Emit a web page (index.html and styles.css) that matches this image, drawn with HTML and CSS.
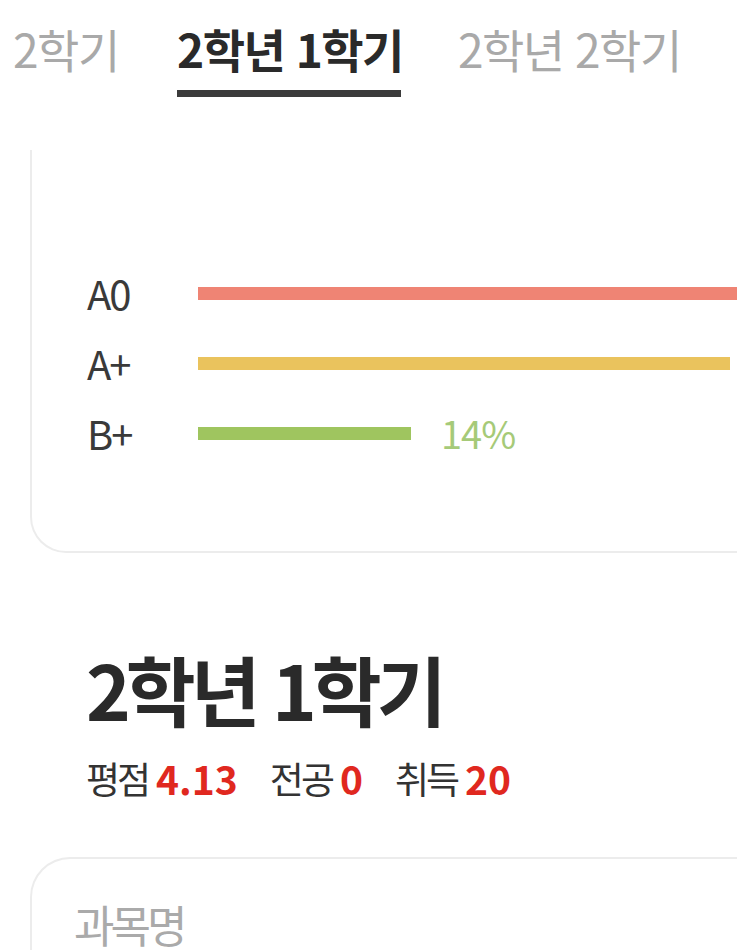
FILE: index.html
```html
<!DOCTYPE html>
<html lang="ko">
<head>
<meta charset="utf-8">
<link rel="stylesheet" href="styles.css">
</head>
<body>
<div class="page">
  <header class="tabs">
    <div class="tab">1학년 2학기</div>
    <div class="tab active">2학년 1학기</div>
    <div class="tab">2학년 2학기</div>
  </header>

  <section class="card chart">
    <div class="row">
      <span class="grade">A0</span>
      <div class="track"><div class="bar red" style="width:600px"></div></div>
    </div>
    <div class="row">
      <span class="grade">A+</span>
      <div class="track"><div class="bar yellow" style="width:532px"></div></div>
    </div>
    <div class="row">
      <span class="grade">B+</span>
      <div class="track"><div class="bar green" style="width:213px"></div><span class="pct">14%</span></div>
    </div>
  </section>

  <section class="summary">
    <h1 class="title">2학년 1학기</h1>
    <div class="stats">
      <span class="stat"><span class="label">평점</span><b class="num">4.13</b></span>
      <span class="stat"><span class="label">전공</span><b class="num">0</b></span>
      <span class="stat"><span class="label">취득</span><b class="num">20</b></span>
    </div>
  </section>

  <section class="card list">
    <div class="col-head">과목명</div>
  </section>
</div>
</body>
</html>
```

FILE: styles.css
```css
html, body {
  margin: 0;
  padding: 0;
  background: #ffffff;
  overflow: hidden;
}
.page {
  width: 737px;
  height: 950px;
  overflow: hidden;
  font-family: "Noto Sans CJK KR", "Noto Sans", sans-serif;
  color: #333333;
}
.tabs {
  height: 150px;
  display: flex;
  gap: 57px;
  margin-left: -104px;
  box-sizing: border-box;
  padding-top: 18px;
}
.tab {
  flex: none;
  width: 224px;
  font-size: 46px;
  line-height: 60px;
  letter-spacing: -1.5px;
  color: #a9a9a9;
  white-space: nowrap;
  height: 79px;
  box-sizing: border-box;
}
.tab.active {
  color: #2a2a2a;
  font-weight: 700;
  border-bottom: 7px solid #3b3b3b;
}
.card {
  margin-left: 30px;
  width: 800px;
  box-sizing: border-box;
  border: 2px solid #ececec;
}
.chart {
  border-top: none;
  border-radius: 0 0 0 36px;
  height: 403px;
  padding-top: 108px;
  display: flex;
  flex-direction: column;
}
.row {
  height: 70px;
  display: flex;
  align-items: center;
}
.grade {
  width: 111px;
  padding-left: 55px;
  font-size: 40px;
  line-height: 50px;
  letter-spacing: -2px;
  color: #3a3a3a;
  flex: none;
}
.track {
  display: flex;
  align-items: center;
  gap: 30px;
}
.bar {
  height: 13px;
  flex: none;
}
.red { background: #ef8474; }
.yellow { background: #eac35d; }
.green { background: #9fc55f; }
.pct {
  font-size: 38px;
  line-height: 50px;
  color: #a6ca78;
  letter-spacing: -1px;
}
.summary {
  padding: 90px 0 0 86px;
}
.title {
  margin: 0;
  font-size: 76px;
  line-height: 90px;
  font-weight: 700;
  letter-spacing: -5px;
  color: #2a2a2a;
}
.stats {
  display: flex;
  gap: 32px;
  margin-top: 20px;
  font-size: 37px;
  line-height: 50px;
}
.stat {
  display: flex;
  gap: 8px;
}
.label {
  color: #333333;
  letter-spacing: -3px;
}
.num {
  color: #e0281f;
  font-weight: 700;
  font-size: 39px;
  letter-spacing: 0;
}
.list {
  margin-top: 54px;
  border-bottom: none;
  border-radius: 40px 0 0 0;
  height: 200px;
  padding: 35px 0 0 42px;
}
.col-head {
  font-size: 44px;
  line-height: 60px;
  color: #aaaaaa;
  letter-spacing: -4px;
}
```
